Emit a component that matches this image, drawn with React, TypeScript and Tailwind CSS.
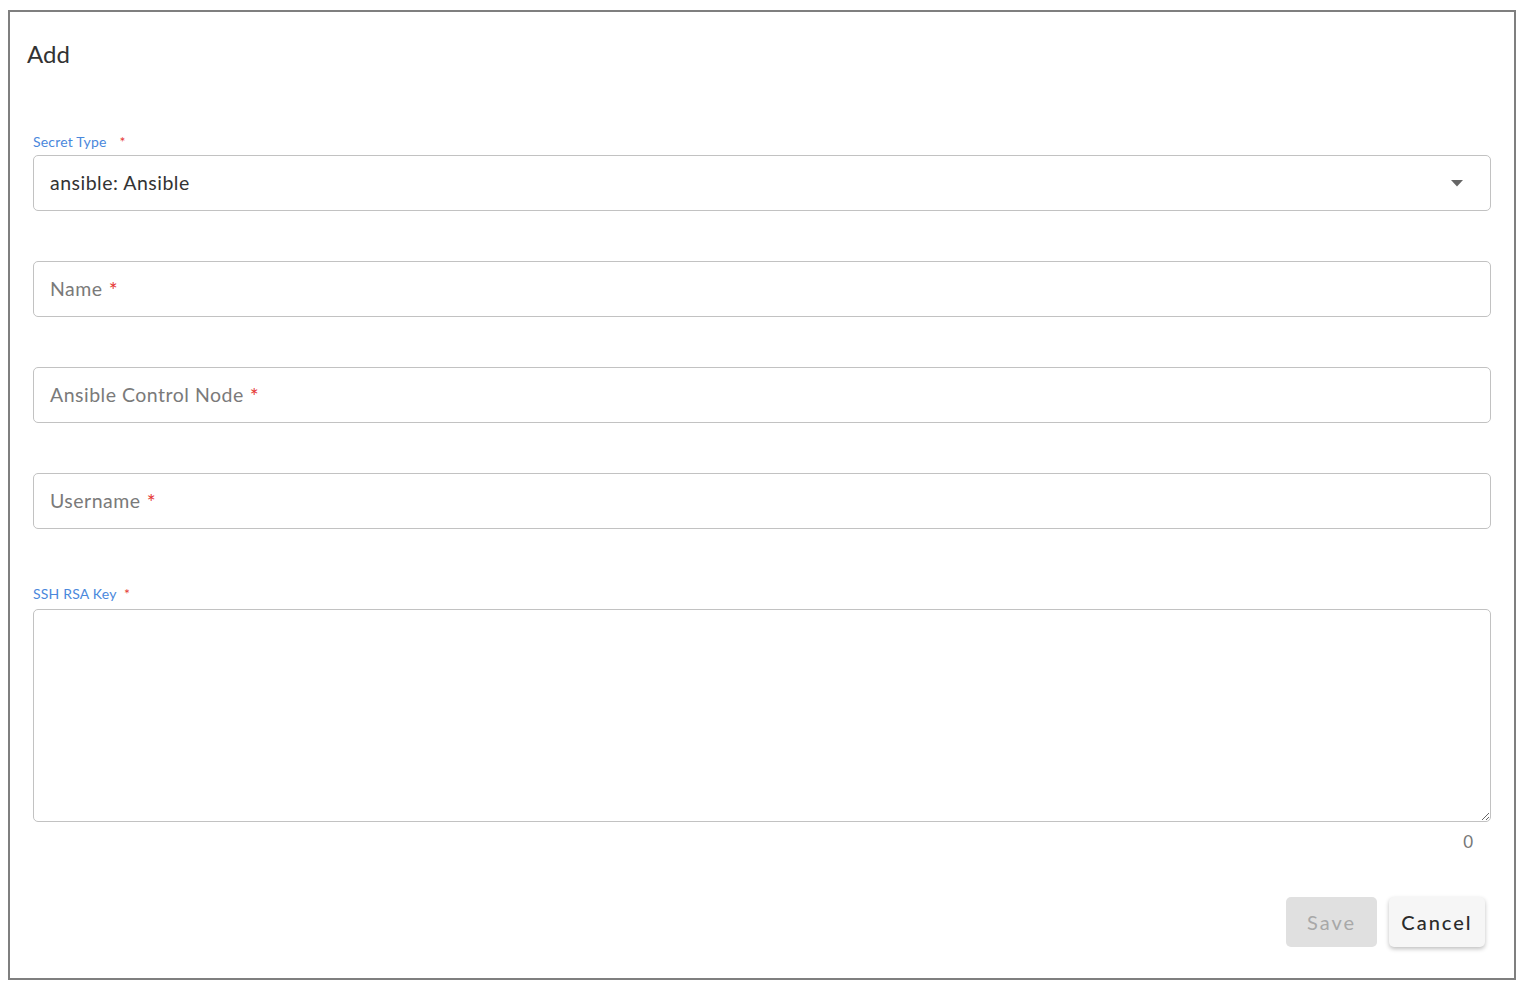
import { useState } from "react";

const font = { fontFamily: "Lato, 'Noto Sans', sans-serif" };

function Req() {
  return <span className="ml-[6px] text-[21px] leading-none text-[#e53935]">*</span>;
}

function TextField({ label }: { label: string }) {
  const [value, setValue] = useState("");
  return (
    <div className="relative mt-[50px] h-[56px] rounded-[5px] border-[1.5px] border-[#c2c2c2] bg-white">
      {value === "" && (
        <div className="pointer-events-none absolute left-[16px] top-0 flex h-full items-center text-[19.5px] tracking-[0.5px] text-[#7a7a7a]">
          {label}
          <Req />
        </div>
      )}
      <input
        className="h-full w-full bg-transparent px-[16px] text-[19.5px] tracking-[0.5px] text-[#333] focus:outline-none"
        value={value}
        onChange={(e) => setValue(e.target.value)}
      />
    </div>
  );
}

export default function App() {
  const [key, setKey] = useState("");
  return (
    <div className="h-[986px] w-[1522px] bg-white pl-[8px] pt-[10px]" style={font}>
      <div className="h-[970px] w-[1508px] border-2 border-[#7f7f7f] bg-white pt-[26px]">
        <div className="pl-[17px] text-[24px] leading-[32px] text-[#333]">Add</div>
        <div className="mt-[64px] px-[23px]">
          <div className="h-4 text-[14px] leading-4 tracking-[0.2px] text-[#4a88dc]">
            Secret Type <span className="ml-[9px] text-[#e53935]">*</span>
          </div>
          <div className="mt-[5px] flex h-[56px] items-center justify-between rounded-[5px] border-[1.5px] border-[#c2c2c2] pl-[16px] pr-[27px]">
            <span className="text-[19.5px] tracking-[0.5px] text-[#333]">ansible: Ansible</span>
            <svg width="12" height="7" viewBox="0 0 12 7">
              <path d="M0 0h12L6 6.5z" fill="#666" />
            </svg>
          </div>
          <TextField label="Name" />
          <TextField label="Ansible Control Node" />
          <TextField label="Username" />
          <div className="mt-[57px] h-4 text-[14px] leading-4 tracking-[0.2px] text-[#4a88dc]">
            SSH RSA Key <span className="ml-[4px] text-[#e53935]">*</span>
          </div>
          <textarea
            className="mt-[7px] block h-[213px] w-full resize-y rounded-[5px] border-[1.5px] border-[#c2c2c2] p-[16px] text-[17px] text-[#333] focus:outline-none"
            value={key}
            onChange={(e) => setKey(e.target.value)}
          />
          <div className="mt-[10px] pr-[18px] text-right text-[17px] leading-5 text-[#777]">{key.length}</div>
          <div className="mt-[45px] flex justify-end gap-[12px] pr-[6px]">
            <button
              disabled
              className="h-[50px] w-[91px] rounded-[5px] bg-[#e0e0e0] text-[20px] tracking-[2px] text-[#a8a8a8]"
            >
              Save
            </button>
            <button className="h-[50px] w-[96px] rounded-[5px] bg-[#f6f6f6] text-[20px] font-medium tracking-[2px] text-[#2b2b2b] shadow-[0_2px_4px_rgba(0,0,0,0.25)]">
              Cancel
            </button>
          </div>
        </div>
      </div>
    </div>
  );
}
